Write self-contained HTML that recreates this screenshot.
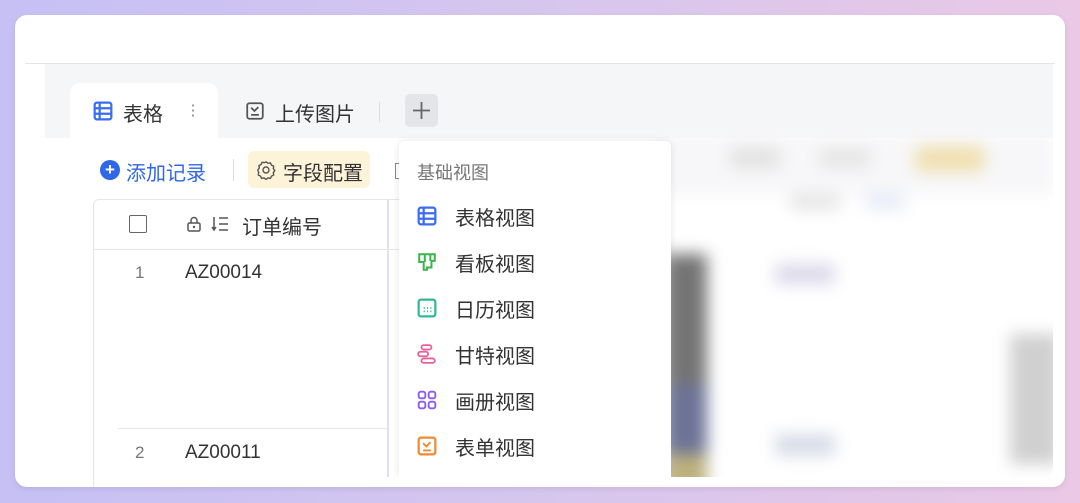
<!DOCTYPE html>
<html><head><meta charset="utf-8"><style>
*{margin:0;padding:0;box-sizing:border-box}
body{width:1080px;height:503px;overflow:hidden;background:linear-gradient(90deg,#c6c0f4 0%,#d6c6ee 50%,#eac8e6 100%);font-family:"Liberation Sans","Noto Sans CJK SC",sans-serif;position:relative}
.card{position:absolute;left:15px;top:15px;width:1050px;height:472px;background:#fff;border-radius:12px;overflow:hidden;box-shadow:0 2px 6px rgba(0,0,0,.08)}
.a{position:absolute}
.t{position:absolute;font-size:20px;color:#333;white-space:nowrap}
.blur{filter:blur(8px)}
</style></head><body>
<div class="card">
 <div class="a" style="left:10px;top:48px;width:1030px;height:1px;background:#e4e4e8"></div>
 <div class="a" style="left:30px;top:49px;width:1008px;height:413px;background:#f5f6f8;border-bottom-right-radius:10px;overflow:hidden">
  <div class="a" style="left:0;top:74px;width:1008px;height:340px;background:#fff"></div>
  <div class="a" style="left:25px;top:19px;width:148px;height:60px;background:#fff;border-radius:10px 10px 0 0"></div>
  <div class="a blur" style="left:610px;top:70px;width:400px;height:350px">
   <div class="a" style="left:0;top:0;width:400px;height:60px;background:#f7f7f9"></div>
   <div class="a" style="left:260px;top:12px;width:70px;height:26px;background:#f0e0b0;border-radius:6px"></div>
   <div class="a" style="left:75px;top:14px;width:50px;height:20px;background:#e2e2e2"></div>
   <div class="a" style="left:165px;top:14px;width:50px;height:20px;background:#e6e6e6"></div>
   <div class="a" style="left:135px;top:60px;width:50px;height:16px;background:#e6e6e6"></div>
   <div class="a" style="left:210px;top:60px;width:40px;height:16px;background:#e8ecf8"></div>
   <div class="a" style="left:10px;top:120px;width:42px;height:240px;background:#747474"></div>
   <div class="a" style="left:10px;top:250px;width:42px;height:70px;background:#6c7396"></div>
   <div class="a" style="left:10px;top:320px;width:42px;height:40px;background:#bcb07c"></div>
   <div class="a" style="left:120px;top:130px;width:60px;height:20px;background:#dcd8ea"></div>
   <div class="a" style="left:120px;top:300px;width:60px;height:22px;background:#d8dce8"></div>
   <div class="a" style="left:355px;top:200px;width:50px;height:130px;background:#d0d0d0"></div>
  </div>
 </div>
 <svg class="a" style="left:78px;top:86px" width="20" height="20" viewBox="0 0 18 18"><rect x="1.5" y="1.5" width="15" height="15" rx="2" fill="none" stroke="#3a6df0" stroke-width="2"/><path d="M1.5 6.5h15M1.5 11.5h15M6 1.5v15" stroke="#3a6df0" stroke-width="2"/></svg>
 <div class="t" style="left:108px;top:83px">表格</div>
 <div class="a" style="left:177px;top:88px;width:2px;height:15px;background:radial-gradient(circle,#999 1px,transparent 1.3px) 0 0/2px 5px"></div>
 <svg class="a" style="left:230px;top:86px" width="20" height="20" viewBox="0 0 18 18"><rect x="2" y="2" width="14" height="14" rx="2" fill="none" stroke="#555" stroke-width="1.6"/><path d="M5.5 6l3 3 3.5-3.5M5.5 12.5h7" stroke="#555" stroke-width="1.6" fill="none"/></svg>
 <div class="t" style="left:260px;top:83px">上传图片</div>
 <div class="a" style="left:364px;top:87px;width:1px;height:20px;background:#ddd"></div>
 <div class="a" style="left:390px;top:79px;width:33px;height:33px;background:#e4e5e8;border-radius:5px"></div>
 <svg class="a" style="left:396px;top:85px" width="21" height="21" viewBox="0 0 21 21"><path d="M10.5 2v17M2 10.5h17" stroke="#666" stroke-width="1.8"/></svg>
 <div class="a" style="left:85px;top:145px;width:20px;height:20px;border-radius:50%;background:#2f67e8;color:#fff;font-size:17px;line-height:19px;text-align:center;font-weight:bold">+</div>
 <div class="t" style="left:111px;top:142px;color:#2f67e8">添加记录</div>
 <div class="a" style="left:218px;top:144px;width:1px;height:22px;background:#ddd"></div>
 <div class="a" style="left:233px;top:136px;width:122px;height:37px;background:#fdf3d8;border-radius:6px"></div>
 <svg class="a" style="left:241px;top:145px" width="20" height="20" viewBox="0 0 20 20"><path d="M10 1.8l2 1.5 2.4-.4 1.1 2.2 2.2 1.1-.4 2.4 1.5 2-1.5 2 .4 2.4-2.2 1.1-1.1 2.2-2.4-.4-2 1.5-2-1.5-2.4.4-1.1-2.2-2.2-1.1.4-2.4L1.8 10l1.5-2-.4-2.4 2.2-1.1 1.1-2.2 2.4.4z" fill="none" stroke="#555" stroke-width="1.4"/><circle cx="10" cy="10" r="3" fill="none" stroke="#555" stroke-width="1.4"/></svg>
 <div class="t" style="left:268px;top:142px">字段配置</div>
 <div class="a" style="left:380px;top:148px;width:8px;height:16px;border:1.5px solid #888;border-right:none"></div>
 <div class="a" style="left:78px;top:184px;width:320px;height:300px;border:1px solid #e6e6ea;border-bottom:none;border-radius:6px 0 0 0"></div>
 <div class="a" style="left:78px;top:234px;width:310px;height:1px;background:#e6e6ea"></div>
 <div class="a" style="left:372px;top:184px;width:2px;height:300px;background:#e2e0ee"></div>
 <div class="a" style="left:114px;top:200px;width:18px;height:18px;border:1.6px solid #666;border-radius:2px"></div>
 <svg class="a" style="left:170px;top:200px" width="18" height="18" viewBox="0 0 18 18"><rect x="3" y="8" width="12" height="8" rx="1.5" fill="none" stroke="#555" stroke-width="1.5"/><path d="M6 8V5.5a3 3 0 016 0V8" fill="none" stroke="#555" stroke-width="1.5"/><circle cx="9" cy="12" r="1.2" fill="#555"/></svg>
 <svg class="a" style="left:196px;top:200px" width="22" height="18" viewBox="0 0 22 18"><path d="M3 2v13M1 12l2 3 2-3M8 3h9M8 9h9M8 15h9" fill="none" stroke="#555" stroke-width="1.5"/></svg>
 <div class="t" style="left:227px;top:196px">订单编号</div>
 <div class="t" style="left:120px;top:248px;font-size:17px;color:#777">1</div>
 <div class="t" style="left:170px;top:247px;font-size:19px">AZ00014</div>
 <div class="a" style="left:103px;top:413px;width:270px;height:1px;background:#e6e6ea"></div>
 <div class="t" style="left:120px;top:428px;font-size:17px;color:#777">2</div>
 <div class="t" style="left:170px;top:427px;font-size:19px">AZ00011</div>
 <div class="a" style="left:384px;top:126px;width:272px;height:336px;background:#fff;border-radius:6px 6px 0 0;box-shadow:0 0 8px rgba(0,0,0,.1)">
  <div class="t" style="left:18px;top:18px;font-size:18px;color:#777">基础视图</div>
  <svg class="a" style="left:18px;top:65px" width="20" height="20" viewBox="0 0 18 18"><rect x="1.5" y="1.5" width="15" height="15" rx="2" fill="none" stroke="#3a6df0" stroke-width="2"/><path d="M1.5 6.5h15M1.5 11.5h15M6 1.5v15" stroke="#3a6df0" stroke-width="2"/></svg>
  <div class="t" style="left:56px;top:61px">表格视图</div>
  <svg class="a" style="left:18px;top:111px" width="20" height="20" viewBox="0 0 18 18"><path d="M2 2h14v6h-3v6h-4v2h-3V9H2z" fill="none" stroke="#3cb44a" stroke-width="1.8"/><path d="M7 2v7M12 2v6" stroke="#3cb44a" stroke-width="1.8"/></svg>
  <div class="t" style="left:56px;top:107px">看板视图</div>
  <svg class="a" style="left:18px;top:157px" width="20" height="20" viewBox="0 0 18 18"><rect x="1.5" y="1.5" width="15" height="15" rx="2" fill="none" stroke="#30b89a" stroke-width="2"/><path d="M6 9h1M9 9h1M12 9h1M6 12h1M9 12h1M12 12h1" stroke="#30b89a" stroke-width="1.6"/></svg>
  <div class="t" style="left:56px;top:153px">日历视图</div>
  <svg class="a" style="left:18px;top:203px" width="20" height="20" viewBox="0 0 18 18"><rect x="4" y="1" width="9" height="4" rx="2" fill="none" stroke="#e8609c" stroke-width="1.6"/><rect x="1" y="7" width="9" height="4" rx="2" fill="none" stroke="#e8609c" stroke-width="1.6"/><rect x="4" y="13" width="12" height="4" rx="2" fill="none" stroke="#e8609c" stroke-width="1.6"/></svg>
  <div class="t" style="left:56px;top:199px">甘特视图</div>
  <svg class="a" style="left:18px;top:249px" width="20" height="20" viewBox="0 0 18 18"><rect x="1.5" y="1.5" width="6" height="6" rx="2" fill="none" stroke="#8b5cf0" stroke-width="1.7"/><rect x="10.5" y="1.5" width="6" height="6" rx="2" fill="none" stroke="#8b5cf0" stroke-width="1.7"/><rect x="1.5" y="10.5" width="6" height="6" rx="2" fill="none" stroke="#8b5cf0" stroke-width="1.7"/><rect x="10.5" y="10.5" width="6" height="6" rx="2" fill="none" stroke="#8b5cf0" stroke-width="1.7"/></svg>
  <div class="t" style="left:56px;top:245px">画册视图</div>
  <svg class="a" style="left:18px;top:295px" width="20" height="20" viewBox="0 0 18 18"><rect x="1.5" y="1.5" width="15" height="15" rx="2" fill="none" stroke="#f08a30" stroke-width="2"/><path d="M5.5 6.5l3 3 3.5-4M5.5 13h7" stroke="#f08a30" stroke-width="1.7" fill="none"/></svg>
  <div class="t" style="left:56px;top:291px">表单视图</div>
 </div>
 <div class="a" style="left:370px;top:462px;width:300px;height:10px;background:#fff"></div>
</div>
</body></html>
